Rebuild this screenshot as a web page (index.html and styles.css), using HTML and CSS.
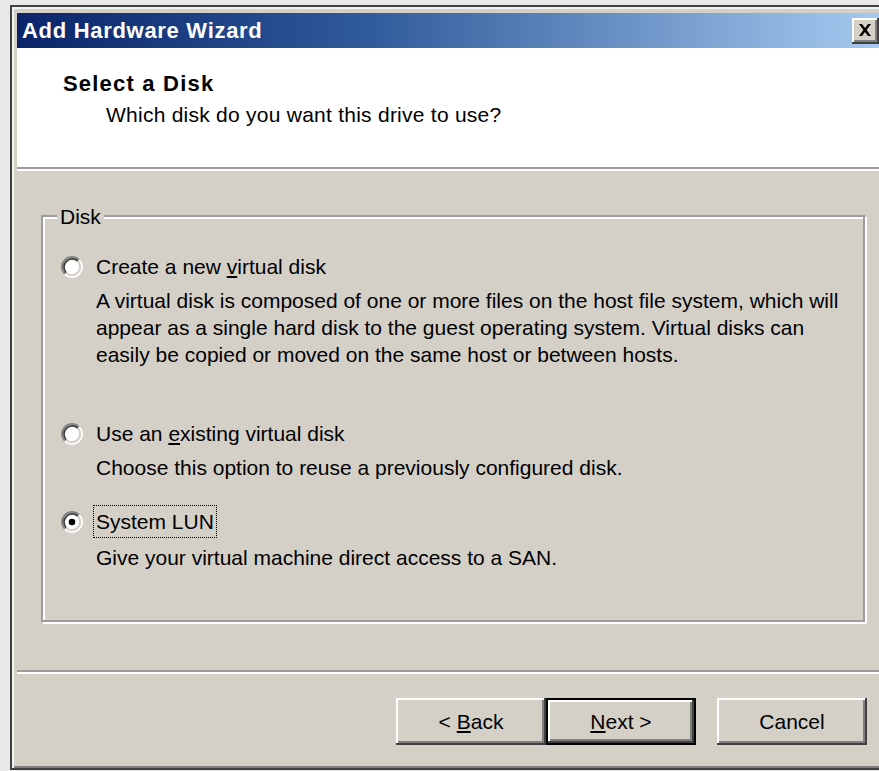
FILE: index.html
```html
<!DOCTYPE html>
<html lang="en">
<head>
<meta charset="utf-8">
<title>Add Hardware Wizard</title>
<link rel="stylesheet" href="styles.css">
</head>
<body>
<div class="window">
  <div class="titlebar">
    <span class="title">Add Hardware Wizard</span>
    <button class="close" type="button" aria-label="Close">
      <svg width="14" height="12" viewBox="0 0 14 12">
        <path d="M1 0h3l3 4 3-4h3L8.6 6 13 12h-3L7 8 4 12H1l4.4-6z" fill="#000"/>
      </svg>
    </button>
  </div>

  <div class="header">
    <div class="header-title">Select a Disk</div>
    <div class="header-sub">Which disk do you want this drive to use?</div>
  </div>
  <div class="rule"></div>

  <div class="content">
    <div class="group">
      <span class="group-label">Disk</span>

      <div class="option">
        <div class="radio-row">
          <svg class="radio" width="22" height="22" viewBox="0 0 12 12">
            <circle cx="6" cy="6" r="4.2" fill="#fff"/>
            <path d="M2.11 9.89A5.5 5.5 0 0 1 9.89 2.11" stroke="#808080" fill="none"/>
            <path d="M9.89 2.11A5.5 5.5 0 0 1 2.11 9.89" stroke="#fff" fill="none"/>
            <path d="M2.82 9.18A4.5 4.5 0 0 1 9.18 2.82" stroke="#404040" fill="none"/>
            <path d="M9.18 2.82A4.5 4.5 0 0 1 2.82 9.18" stroke="#d4d0c8" fill="none"/>
          </svg>
          <span>Create a new <u>v</u>irtual disk</span>
        </div>
        <p class="desc">A virtual disk is composed of one or more files on the host file system, which will<br>appear as a single hard disk to the guest operating system. Virtual disks can<br>easily be copied or moved on the same host or between hosts.</p>
      </div>

      <div class="option option-second">
        <div class="radio-row">
          <svg class="radio" width="22" height="22" viewBox="0 0 12 12">
            <circle cx="6" cy="6" r="4.2" fill="#fff"/>
            <path d="M2.11 9.89A5.5 5.5 0 0 1 9.89 2.11" stroke="#808080" fill="none"/>
            <path d="M9.89 2.11A5.5 5.5 0 0 1 2.11 9.89" stroke="#fff" fill="none"/>
            <path d="M2.82 9.18A4.5 4.5 0 0 1 9.18 2.82" stroke="#404040" fill="none"/>
            <path d="M9.18 2.82A4.5 4.5 0 0 1 2.82 9.18" stroke="#d4d0c8" fill="none"/>
          </svg>
          <span>Use an <u>e</u>xisting virtual disk</span>
        </div>
        <p class="desc">Choose this option to reuse a previously configured disk.</p>
      </div>

      <div class="option option-third">
        <div class="radio-row">
          <svg class="radio" width="22" height="22" viewBox="0 0 12 12">
            <circle cx="6" cy="6" r="4.2" fill="#fff"/>
            <path d="M2.11 9.89A5.5 5.5 0 0 1 9.89 2.11" stroke="#808080" fill="none"/>
            <path d="M9.89 2.11A5.5 5.5 0 0 1 2.11 9.89" stroke="#fff" fill="none"/>
            <path d="M2.82 9.18A4.5 4.5 0 0 1 9.18 2.82" stroke="#404040" fill="none"/>
            <path d="M9.18 2.82A4.5 4.5 0 0 1 2.82 9.18" stroke="#d4d0c8" fill="none"/>
            <circle cx="6" cy="6" r="1.8" fill="#000"/>
          </svg>
          <span class="focused">System LUN</span>
        </div>
        <p class="desc desc-last">Give your virtual machine direct access to a SAN.</p>
      </div>
    </div>
  </div>

  <div class="rule rule-bottom"></div>

  <div class="buttons">
    <button class="btn" type="button">&lt; <u>B</u>ack</button>
    <button class="btn btn-default" type="button"><u>N</u>ext &gt;</button>
    <button class="btn btn-cancel" type="button">Cancel</button>
  </div>
</div>
</body>
</html>
```

FILE: styles.css
```css
html, body {
  margin: 0;
  height: 100%;
  overflow: hidden;
}

body {
  box-sizing: border-box;
  padding: 5px 0 0 10px;
  background: #e8e8e8;
  font-family: "Liberation Sans", Arial, sans-serif;
  font-size: 21px;
  color: #000;
}

/* dialog frame */
.window {
  box-sizing: border-box;
  width: 880px;
  height: 765px;
  padding: 6px 5px 0 5px;
  background: #d4d0c8;
  border: 2px solid #404040;
  box-shadow: inset 2px 2px 0 #f2f2f2, inset -2px -2px 0 #808080;
}

.titlebar {
  height: 35px;
  display: flex;
  align-items: center;
  justify-content: space-between;
  padding: 0 4px 0 5px;
  background: linear-gradient(to right, #0a246a 0%, #2f5a9a 40%, #a6caf0 100%);
}

.title {
  color: #fff;
  font-weight: bold;
  font-size: 22px;
  letter-spacing: 0.7px;
}

.close {
  width: 27px;
  height: 26px;
  margin: 0;
  padding: 0;
  border: none;
  background: #d4d0c8;
  display: flex;
  align-items: center;
  justify-content: center;
  box-shadow: inset -2px -2px 0 #404040, inset 2px 2px 0 #fff, inset -4px -4px 0 #808080;
}

.close svg {
  margin: -2px 0 0 -1px;
}

/* white banner */
.header {
  box-sizing: border-box;
  height: 119px;
  padding: 22px 0 0 46px;
  background: #fff;
  line-height: 27px;
}

.header-title {
  font-weight: bold;
  font-size: 22px;
  letter-spacing: 1.2px;
}

.header-sub {
  margin-top: 4px;
  padding-left: 43px;
  letter-spacing: 0.25px;
}

/* etched separators */
.rule {
  height: 2px;
  background: #9c9c9c;
  border-bottom: 2px solid #fff;
}

.content {
  padding: 44px 18px 0 24px;
}

.group {
  position: relative;
  box-sizing: border-box;
  height: 407px;
  padding: 36px 0 0 18px;
  border: 2px solid #9c9c9c;
  box-shadow: 2px 2px 0 #fff, inset 2px 2px 0 #fff;
  line-height: 27px;
}

.group-label {
  position: absolute;
  top: -14px;
  left: 14px;
  padding: 0 3px;
  background: #d4d0c8;
  line-height: 27px;
}

.radio-row {
  display: flex;
  align-items: center;
  gap: 13px;
}

.radio {
  display: block;
  flex: none;
}

.desc {
  margin: 7px 0 0 35px;
}

.desc-last {
  margin-top: 9px;
}

.option-second {
  margin-top: 52px;
}

.option-third {
  margin-top: 27px;
}

.focused {
  outline: 1px dotted #000;
  outline-offset: 2px;
}

.rule-bottom {
  margin-top: 48px;
}

/* command buttons */
.buttons {
  display: flex;
  justify-content: flex-end;
  padding: 24px 16px 0 0;
}

.btn {
  box-sizing: border-box;
  width: 150px;
  height: 47px;
  margin: 0;
  padding: 0;
  border: none;
  background: #d4d0c8;
  font-family: inherit;
  font-size: 21px;
  color: #000;
  box-shadow: inset -2px -2px 0 #404040, inset 2px 2px 0 #fff, inset -4px -4px 0 #808080;
}

.btn-default {
  box-shadow: inset 0 0 0 2px #000, inset -4px -4px 0 #404040, inset 4px 4px 0 #fff, inset -6px -6px 0 #808080;
}

.btn-cancel {
  margin-left: 21px;
}
```
